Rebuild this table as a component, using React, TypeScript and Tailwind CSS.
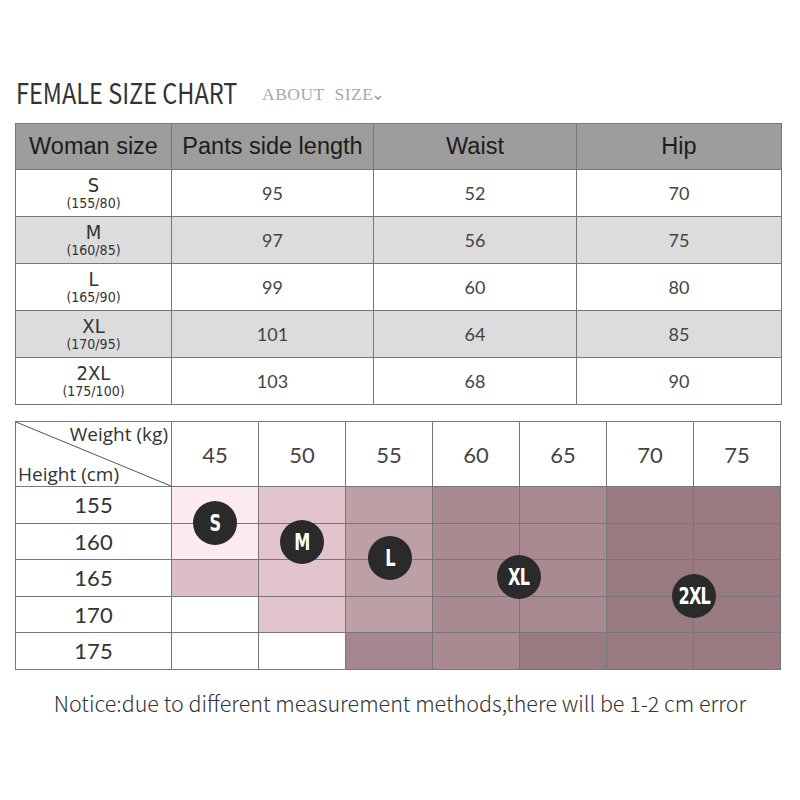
const sizeRows = [
  { size: 'S', spec: '(155/80)', pants: '95', waist: '52', hip: '70' },
  { size: 'M', spec: '(160/85)', pants: '97', waist: '56', hip: '75' },
  { size: 'L', spec: '(165/90)', pants: '99', waist: '60', hip: '80' },
  { size: 'XL', spec: '(170/95)', pants: '101', waist: '64', hip: '85' },
  { size: '2XL', spec: '(175/100)', pants: '103', waist: '68', hip: '90' },
];

const weights = ['45', '50', '55', '60', '65', '70', '75'];

// background per height row, per weight column
const W = 'bg-white';
const P0 = 'bg-[#fbeaee]';
const P1 = 'bg-[#e2c5cc]';
const P1b = 'bg-[#dcbfc6]';
const P2 = 'bg-[#bd9fa6]';
const P3 = 'bg-[#a98a91]';
const P3b = 'bg-[#a6868e]';
const P4 = 'bg-[#9a7b82]';

const gridRows = [
  { height: '155', cells: [P0, P1, P2, P3, P3, P4, P4] },
  { height: '160', cells: [P0, P1, P2, P3, P3, P4, P4] },
  { height: '165', cells: [P1b, P1, P2, P3, P3, P4, P4] },
  { height: '170', cells: [W, P1, P2, P3, P3, P4, P4] },
  { height: '175', cells: [W, W, P3b, P3, P4, P4, P4] },
];

const badges = [
  { label: 'S', left: 'left-[178px]', top: 'top-[80px]' },
  { label: 'M', left: 'left-[265px]', top: 'top-[99px]' },
  { label: 'L', left: 'left-[353px]', top: 'top-[115px]' },
  { label: 'XL', left: 'left-[482px]', top: 'top-[134px]' },
  { label: '2XL', left: 'left-[657px]', top: 'top-[153px]' },
];

const cond = "font-['DejaVu_Sans_Condensed','DejaVu_Sans',sans-serif]";
const source = "font-['Noto_Sans_CJK_SC',sans-serif]";
const round = "font-['Lato','Open_Sans',sans-serif]";

export default function App() {
  return (
    <div className="min-h-[800px] w-[800px] bg-white pt-[76px]">
      <div className="flex items-end pl-[16px]">
        <h1 className={`${source} w-[220px] whitespace-nowrap text-[28px] leading-[32px] text-[#333]`}>
          <span className="inline-block origin-left scale-x-[0.84]">FEMALE SIZE CHART</span>
        </h1>
        <span className="mb-[1px] ml-[26px] font-['Liberation_Serif',serif] text-[17.5px] tracking-[0.5px] text-[#aaa]">
          ABOUT&nbsp; SIZE
        </span>
        <svg className="mb-[7px] ml-[1px]" width="8" height="6" viewBox="0 0 8 6">
          <path d="M1 1 L4 4 L7 1" fill="none" stroke="#999" strokeWidth="1.6" />
        </svg>
      </div>

      <table className="ml-[15px] mt-[15px] w-[766px] table-fixed border-collapse border border-[#777]">
        <colgroup>
          <col className="w-[156px]" />
          <col className="w-[202px]" />
          <col className="w-[203px]" />
          <col className="w-[205px]" />
        </colgroup>
        <thead>
          <tr className="h-[46px] bg-[#9d9d9d] font-['Liberation_Sans',sans-serif] text-[23.5px] text-[#1c1c1c]">
            <th className="border border-[#777] font-normal">Woman size</th>
            <th className="border border-[#777] font-normal">Pants side length</th>
            <th className="border border-[#777] font-normal">Waist</th>
            <th className="border border-[#777] font-normal">Hip</th>
          </tr>
        </thead>
        <tbody>
          {sizeRows.map((r, i) => (
            <tr key={r.size} className={`h-[47px] ${i % 2 === 1 ? 'bg-[#dcdcdc]' : 'bg-white'}`}>
              <td className="border border-[#777] text-center text-[#333]">
                <div className={`${cond} text-[20px] leading-[19px]`}>{r.size}</div>
                <div className={`${cond} text-[14px] leading-[16px]`}>{r.spec}</div>
              </td>
              <td className={`border border-[#777] text-center ${round} text-[18px] text-[#444]`}>{r.pants}</td>
              <td className={`border border-[#777] text-center ${round} text-[18px] text-[#444]`}>{r.waist}</td>
              <td className={`border border-[#777] text-center ${round} text-[18px] text-[#444]`}>{r.hip}</td>
            </tr>
          ))}
        </tbody>
      </table>

      <div className="relative ml-[15px] mt-[16px] w-[766px]">
        <table className="w-full table-fixed border-collapse border border-[#777]">
          <colgroup>
            <col className="w-[156px]" />
            {weights.map((w) => (
              <col key={w} />
            ))}
          </colgroup>
          <thead>
            <tr className="h-[65px]">
              <th className="relative border border-[#777] p-0 font-normal">
                <svg className="absolute inset-0 h-full w-full" preserveAspectRatio="none" viewBox="0 0 100 100">
                  <line x1="0" y1="0" x2="100" y2="100" stroke="#555" strokeWidth="1" vectorEffect="non-scaling-stroke" />
                </svg>
                <div className="relative flex h-[64px] flex-col justify-between font-['Open_Sans',sans-serif] text-[19px] leading-[24px] text-[#333]">
                  <span className="self-end pr-[3px]">Weight (kg)</span>
                  <span className="self-start pl-[2px]">Height (cm)</span>
                </div>
              </th>
              {weights.map((w) => (
                <th key={w} className={`border border-[#777] ${round} text-[22px] font-normal text-[#444]`}>
                  {w}
                </th>
              ))}
            </tr>
          </thead>
          <tbody>
            {gridRows.map((r) => (
              <tr key={r.height} className="h-[36.5px]">
                <td className={`border border-[#777] bg-white text-center ${round} text-[22px] text-[#333]`}>{r.height}</td>
                {r.cells.map((c, i) => (
                  <td key={i} className={`border border-[#777] ${c}`} />
                ))}
              </tr>
            ))}
          </tbody>
        </table>
        {badges.map((b) => (
          <div
            key={b.label}
            className={`absolute ${b.left} ${b.top} flex h-[44px] w-[44px] items-center justify-center rounded-full bg-[#2a2a2a] ${cond} text-[23px] font-bold text-white`}
          >
            <span className="inline-block scale-x-[0.78] tracking-[-1px]">{b.label}</span>
          </div>
        ))}
      </div>

      <p className={`mt-[17px] text-center ${source} text-[21.5px] font-light text-[#333]`}>
        Notice:due to different measurement methods,there will be 1-2 cm error
      </p>
    </div>
  );
}
